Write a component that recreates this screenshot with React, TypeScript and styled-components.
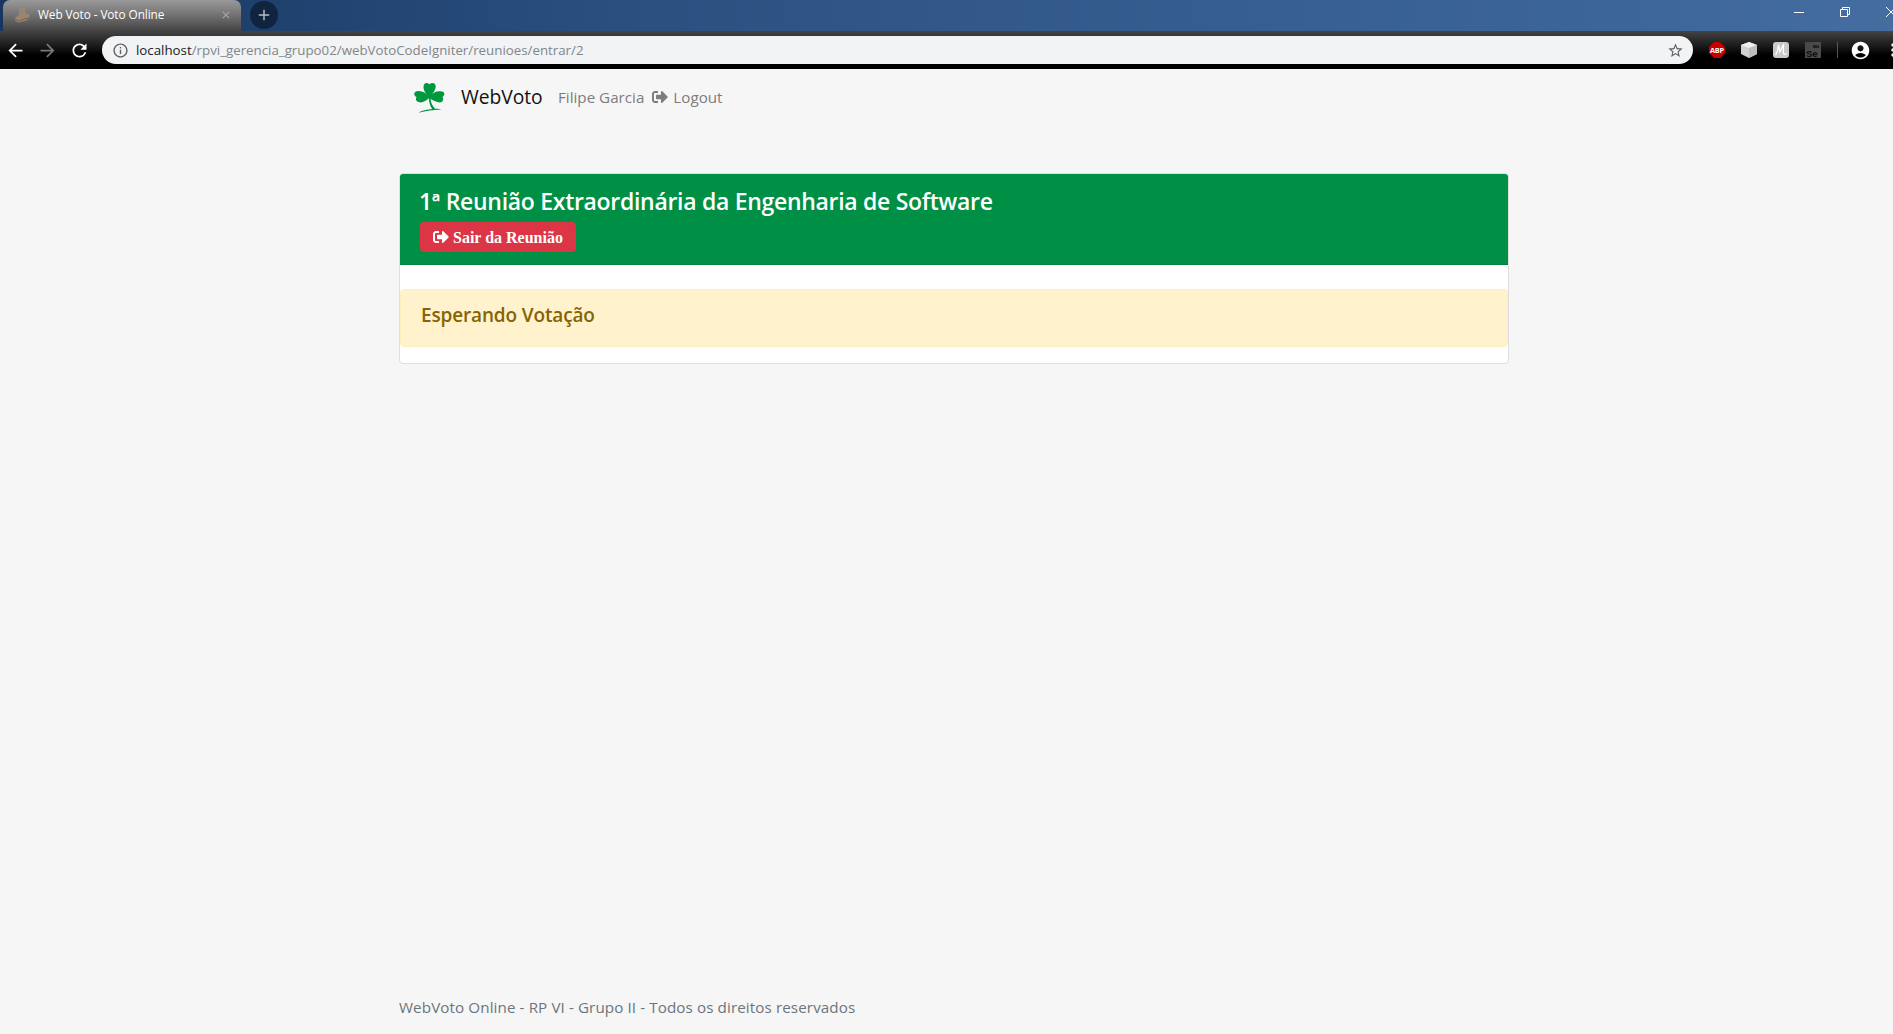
import React from "react";
import styled, { createGlobalStyle } from "styled-components";
import { FaSignOutAlt } from "react-icons/fa";
import {
  MdArrowBack,
  MdArrowForward,
  MdRefresh,
  MdInfoOutline,
  MdStarBorder,
  MdAccountCircle,
  MdMoreVert,
  MdAdd,
  MdClose,
} from "react-icons/md";

const GlobalStyle = createGlobalStyle`
  *, *::before, *::after { box-sizing: border-box; }
  html, body { margin: 0; overflow: hidden; }
  body {
    background: #f6f6f6;
    font-family: "Segoe UI", "Open Sans", "Noto Sans", sans-serif;
    font-size: 15px;
    color: #212529;
  }
  svg { display: block; flex: none; }
`;

const Window = styled.div`
  display: flex;
  flex-direction: column;
  width: 100%;
  height: 1034px;
  overflow: hidden;
`;

const TitleBar = styled.div`
  display: flex;
  height: 31px;
  flex: none;
  background: linear-gradient(90deg, #193662 0, #20426f 300px, #2a5080 620px, #32598a 1000px, #3d669b 1640px, #456da0 100%);
`;

const Tab = styled.div`
  display: flex;
  align-items: center;
  width: 238px;
  height: 31px;
  margin-left: 3px;
  padding: 0 9px 2px 11px;
  border-radius: 7px 7px 0 0;
  background: linear-gradient(#999 0, #7b7b7b 12px, #444 31px);
  color: #fff;
`;

const TabTitle = styled.span`
  flex: 1;
  margin-left: 8px;
  padding-bottom: 1px;
  font-size: 11.8px;
  letter-spacing: -0.07px;
  white-space: nowrap;
`;

const NewTab = styled.div`
  display: grid;
  place-items: center;
  width: 28px;
  height: 28px;
  margin: 1px 0 0 9px;
  border-radius: 50%;
  background: #10233f;
  color: #b5bbc4;
`;

const Controls = styled.div`
  display: flex;
  margin-left: auto;
  padding-top: 7px;
  width: 99px;
  flex: none;
  overflow: hidden;
`;

const Toolbar = styled.div`
  display: flex;
  align-items: center;
  height: 38px;
  flex: none;
  padding-left: 5px;
  overflow: hidden;
  background: linear-gradient(#444 0, #363636 5px, #000 24px);
  color: #fff;
`;

const NavButton = styled.span<{ $dim?: boolean }>`
  display: grid;
  justify-content: start;
  width: 22px;
  flex: none;
  margin-right: 10px;
  color: ${(p) => (p.$dim ? "#777" : "#fff")};
`;

const AddressBar = styled.div`
  display: flex;
  align-items: center;
  width: 1591px;
  height: 28px;
  flex: none;
  margin-left: 1px;
  padding: 0 9px 0 10px;
  border-radius: 14px;
  background: #f1f3f4;
  color: #5f6368;
`;

const Url = styled.span`
  flex: 1;
  margin-left: 7px;
  font-size: 13.3px;
  letter-spacing: 0;
  color: #80868b;
  b { font-weight: 400; color: #202124; }
`;

const Extensions = styled.div`
  display: flex;
  align-items: center;
  gap: 16px;
  margin-left: 16px;
`;

const Divider = styled.span`
  width: 1px;
  height: 16px;
  flex: none;
  margin: 0 12px 0 16px;
  background: #555;
`;

const MenuButton = styled.span`
  flex: none;
  margin-left: 12px;
`;

const Container = styled.div`
  display: flex;
  flex-direction: column;
  flex: 1;
  width: 1110px;
  margin-left: 399px;
`;

const Navbar = styled.nav`
  display: flex;
  align-items: center;
  height: 56px;
  padding-left: 15px;
  color: #7d7d7d;
`;

const Brand = styled.span`
  width: 97px;
  margin-left: 16px;
  font-size: 19.3px;
  line-height: 28px;
  padding-bottom: 1px;
  letter-spacing: -0.05px;
  color: #111;
`;

const NavText = styled.span`
  font-size: 15.2px;
  line-height: 22px;
  padding-bottom: 1px;
  letter-spacing: 0;
  white-space: nowrap;
`;

const NavIcon = styled.span`
  margin: 0 5px 0 8px;
  padding-bottom: 1px;
`;

const Card = styled.section`
  margin-top: 48px;
  height: 191px;
  border: 1px solid #dfdfdf;
  border-radius: 4px;
  background: #fff;
  overflow: hidden;
`;

const CardHeader = styled.header`
  height: 91px;
  padding: 13px 20px 0;
  border-bottom: 1px solid #008040;
  background: #009045;
`;

const Title = styled.h4`
  margin: 0 0 6px -1px;
  font-size: 23px;
  font-weight: 600;
  line-height: 29px;
  letter-spacing: -0.3px;
  color: #fff;
  white-space: nowrap;
`;

const LeaveButton = styled.button`
  display: flex;
  align-items: center;
  gap: 4px;
  width: 156px;
  height: 30px;
  padding: 1px 0 0 13px;
  border: 0;
  border-radius: 4px;
  background: #dc3545;
  color: #fff;
  font: bold 16px "Liberation Serif", serif;
  white-space: nowrap;
  svg { margin-bottom: 1px; }
`;

const Alert = styled.div`
  height: 58px;
  margin-top: 24px;
  padding: 11px 20px;
  border: 1px solid #ffeeba;
  border-radius: 4px;
  background: #fff2cd;
  color: #856404;
`;

const AlertText = styled.h5`
  margin: 0;
  font-size: 19px;
  font-weight: 600;
  line-height: 28px;
  letter-spacing: -0.15px;
`;

const Footer = styled.footer`
  margin-top: auto;
  height: 38px;
  line-height: 22px;
  font-size: 15.2px;
  letter-spacing: 0.1px;
  color: #6c757d;
`;

const Boot = () => (
  <svg width="16" height="16" viewBox="0 0 16 16">
    <path d="M5.500 1 11 0l.5 6 4 1.500L15 12l-4.500 2L5 15.500 1 14v-3l4-3.500z" fill="#9a8570" />
    <path d="M1 12.500 5 14l5-2 5-1" fill="none" stroke="#75614f" />
  </svg>
);

const Clover = () => (
  <svg width="31" height="31" viewBox="0 0 31 31" fill="#00983f">
    <path d="M15 15C12 12 9 8 9.600 4 10 .5 13 0 15.500 2.200 18 0 21.500 1 21.700 4 22 8 18 12 16.500 15Z" />
    <path d="M15 16C12 19 8 21.500 4.500 20 1.500 19 1.500 17 2.600 15-1 13.500-.2 9.500 3 9.200 8 8.500 12 11.500 15 14Z" />
    <path d="M16 14C19 11 22 9 26 9.200 31 9 31.500 13 28.500 15 30 17.500 29 20.500 25.500 20.500 21.500 20 18 18 15.500 16Z" />
    <path d="M14.500 14h2c0 5 .8 8.500 4.800 13 2.500-.3 4-.2 6 .5-8 .6-15 1.300-23 3.200 3.200-2 8.500-3.300 13.700-3.700C15.500 23 15 19 14.500 14Z" />
  </svg>
);

const WindowButtons = () => (
  <svg width="99" height="11" viewBox="0 0 99 11" fill="none" stroke="#fff">
    <path d="M0 5.500h10M46.500 2.500h7v7h-7zM48.500 2V.5h7v7H54" />
    <path d="m92 0 10 10m0-10-10 10" />
  </svg>
);

const AdBlock = () => (
  <svg width="16" height="16" viewBox="0 0 16 16">
    <path d="M5 0h6l5 5v6l-5 5H5l-5-5V5z" fill="#c90000" />
    <text x="8" y="10.700" textAnchor="middle" fill="#fff" fontSize="7.300" fontWeight="700" fontFamily="Open Sans" textLength="14">ABP</text>
  </svg>
);

const Cube = () => (
  <svg width="16" height="16" viewBox="0 0 16 16">
    <path d="m8 0 8 3v9l-8 4-8-4V3z" fill="#d2d2d2" />
    <path d="m0 3 8-3 8 3-8 3z" fill="#efefef" />
    <path d="m8 6 8-3v9l-8 4z" fill="#bdbdbd" />
  </svg>
);

const LetterM = () => (
  <svg width="16" height="16" viewBox="0 0 16 16">
    <rect width="16" height="16" rx="3" fill="#c9c9c9" />
    <path d="M2.500 13C4 11 5 7 5.500 3c.8 2 1 5 1.300 7C8 8 9 5 10.500 3c0 3-.5 6 0 8.500.5 1.500 2 1 3-.5" fill="none" stroke="#fff" strokeWidth="1.300" />
  </svg>
);

const Selenium = () => (
  <svg width="16" height="16" viewBox="0 0 16 16">
    <path d="M0 0h16v16H0z" fill="#4a4a4a" />
    <path d="M8 3h4v1l2-1v3H8z" fill="#222" />
    <text x="1" y="14.500" fill="#0c0c0c" fontSize="9.500" fontWeight="700" fontFamily="Liberation Sans">Se</text>
  </svg>
);

export default function App() {
  return (
    <Window>
      <GlobalStyle />
      <TitleBar>
        <Tab>
          <Boot />
          <TabTitle>Web Voto - Voto Online</TabTitle>
          <MdClose size={12} color="#aaa" />
        </Tab>
        <NewTab><MdAdd size={18} /></NewTab>
        <Controls><WindowButtons /></Controls>
      </TitleBar>
      <Toolbar>
        <NavButton><MdArrowBack size={21} /></NavButton>
        <NavButton $dim><MdArrowForward size={21} /></NavButton>
        <NavButton><MdRefresh size={21} /></NavButton>
        <AddressBar>
          <MdInfoOutline size={17} />
          <Url><b>localhost</b>/rpvi_gerencia_grupo02/webVotoCodeIgniter/reunioes/entrar/2</Url>
          <MdStarBorder size={17} />
        </AddressBar>
        <Extensions>
          <AdBlock />
          <Cube />
          <LetterM />
          <Selenium />
        </Extensions>
        <Divider />
        <MdAccountCircle size={21} />
        <MenuButton><MdMoreVert size={20} /></MenuButton>
      </Toolbar>
      <Container>
        <Navbar>
          <Clover />
          <Brand>WebVoto</Brand>
          <NavText>Filipe Garcia</NavText>
          <NavIcon><FaSignOutAlt size={16} /></NavIcon>
          <NavText>Logout</NavText>
        </Navbar>
        <Card>
          <CardHeader>
            <Title>1ª Reunião Extraordinária da Engenharia de Software</Title>
            <LeaveButton><FaSignOutAlt size={16} />Sair da Reunião</LeaveButton>
          </CardHeader>
          <Alert><AlertText>Esperando Votação</AlertText></Alert>
        </Card>
        <Footer>WebVoto Online - RP VI - Grupo II - Todos os direitos reservados</Footer>
      </Container>
    </Window>
  );
}
